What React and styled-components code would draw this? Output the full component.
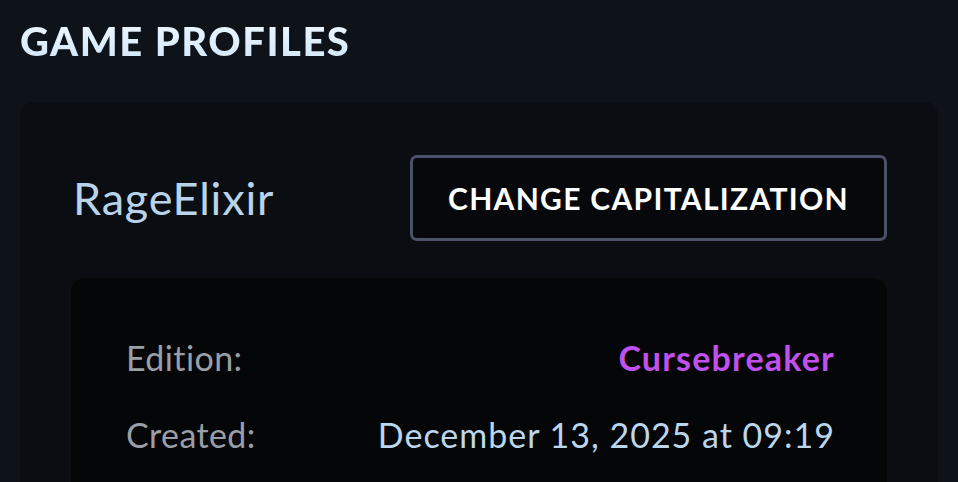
import React from "react";
import styled, { createGlobalStyle } from "styled-components";

const Global = createGlobalStyle`
  html, body { margin: 0; padding: 0; background: #0e1219; }
  body { font-family: "Lato", "Noto Sans", sans-serif; overflow: hidden; }
`;

const Page = styled.div`
  width: 958px;
  height: 482px;
  box-sizing: border-box;
  padding: 18px 20px 0 20px;
  background: #0e1219;
  overflow: hidden;
`;

const Title = styled.h1`
  margin: 0 0 38px 0;
  font-family: "Lato", sans-serif;
  font-weight: 900;
  font-size: 40px;
  line-height: 46px;
  letter-spacing: 1.5px;
  color: #dcefff;
  background: linear-gradient(180deg, #f0f8ff 0%, #cfe6fb 100%);
  -webkit-background-clip: text;
  background-clip: text;
  -webkit-text-fill-color: transparent;
`;

const Card = styled.section`
  background: #0a0d12;
  border-radius: 14px;
  padding: 53px 51px 0 51px;
  height: 420px;
`;

const Header = styled.div`
  display: flex;
  align-items: center;
  justify-content: space-between;
  margin-bottom: 37px;
`;

const Name = styled.h2`
  margin: 0 0 0 2px;
  font-weight: 400;
  font-size: 45px;
  letter-spacing: 0.8px;
  color: #b9d3ea;
`;

const Button = styled.button`
  box-sizing: border-box;
  width: 477px;
  height: 86px;
  background: #06080b;
  border: 3px solid #4b5169;
  border-radius: 7px;
  color: #ffffff;
  font-family: "Lato", sans-serif;
  font-weight: 700;
  font-size: 30px;
  letter-spacing: 1.3px;
  padding: 0;
`;

const Inner = styled.div`
  background: #050608;
  border-radius: 14px;
  padding: 58px 52px 0 55px;
  height: 300px;
`;

const Row = styled.div`
  display: flex;
  justify-content: space-between;
  align-items: baseline;
  height: 77px;
  font-size: 34px;
  line-height: 44px;
  letter-spacing: ${(p) => p.$spacing || "0.9px"};
`;

const Label = styled.span`
  color: #9a9ea6;
  letter-spacing: 0.4px;
`;

const Value = styled.span`
  color: ${(p) => p.$color};
  font-weight: ${(p) => (p.$bold ? 700 : 400)};
`;

export default function App() {
  return (
    <>
      <Global />
      <Page>
        <Title>GAME PROFILES</Title>
        <Card>
          <Header>
            <Name>RageElixir</Name>
            <Button>CHANGE CAPITALIZATION</Button>
          </Header>
          <Inner>
            <Row $spacing="1.2px">
              <Label>Edition:</Label>
              <Value $color="#c150ee" $bold>Cursebreaker</Value>
            </Row>
            <Row $spacing="1px">
              <Label>Created:</Label>
              <Value $color="#bcd6ec">December 13, 2025 at 09:19</Value>
            </Row>
          </Inner>
        </Card>
      </Page>
    </>
  );
}
